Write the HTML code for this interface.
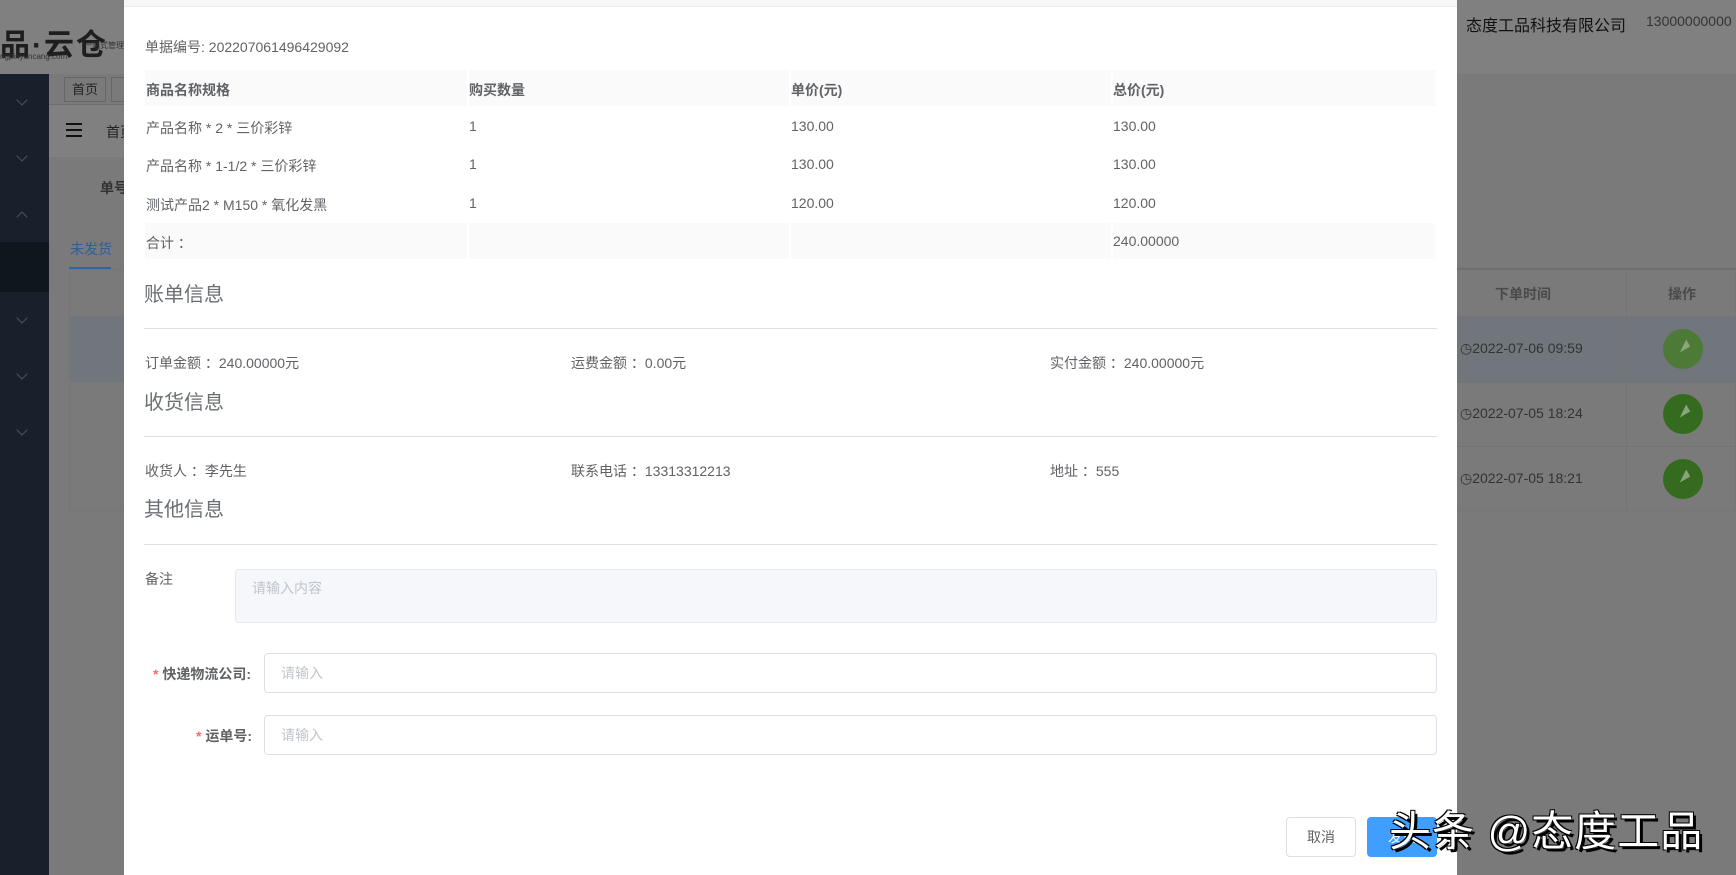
<!DOCTYPE html>
<html><head><meta charset="utf-8"><style>
*{margin:0;padding:0;box-sizing:border-box}
body{width:1736px;height:875px;overflow:hidden;background:#7a7a7a;font-family:"Liberation Sans","Noto Sans CJK SC",sans-serif;position:relative;color:#606266}
.a{position:absolute;white-space:nowrap}
.chev{position:absolute;left:18px;width:8px;height:8px;border-right:1px solid #4a5364;border-bottom:1px solid #4a5364;transform:rotate(45deg)}
.m{position:absolute;left:124px;top:0;width:1333px;height:875px;background:#fff}
.t{font-size:14px;color:#606266}
.th{background:#fafafa;position:absolute;height:36px}
.sec{font-size:20px;color:#6b6e73}
.ln{position:absolute;left:144px;width:1293px;height:1px;background:#dcdfe6}
.inp{position:absolute;border:1px solid #dcdfe6;border-radius:4px;background:#fff;font-size:14px;color:#c0c4cc;padding-left:16px}
.gc{position:absolute;width:40px;height:40px;border-radius:50%;background:#356b1f;left:1663px}
.gc:after{content:"";position:absolute;left:14px;top:13px;width:0;height:0;border-left:12px solid transparent;border-bottom:8px solid #8aa47c;transform:rotate(-30deg)}
</style></head><body>
<div class="a" style="left:0;top:0;width:1736px;height:74px;background:#808080"></div>
<div class="a" style="left:0;top:20px;font-size:30px;font-weight:bold;color:#1e1e1e;letter-spacing:2px">品·云仓</div>
<div class="a" style="left:84px;top:40px;font-size:8px;color:#333">一站式管理</div>
<div class="a" style="left:0;top:52px;font-size:8px;color:#333">ngpinyuncang.com</div>
<div class="a" style="left:1466px;top:12px;font-size:16px;color:#111">态度工品科技有限公司</div>
<div class="a" style="left:1646px;top:13px;font-size:14px;color:#333">13000000000</div>
<div class="a" style="left:0;top:74px;width:49px;height:801px;background:#1a202b"></div>
<div class="a" style="left:0;top:242px;width:49px;height:50px;background:#10161e"></div>
<div class="chev" style="top:96px"></div><div class="chev" style="top:152px"></div>
<div class="chev" style="top:213px;transform:rotate(225deg)"></div>
<div class="chev" style="top:314px"></div><div class="chev" style="top:370px"></div><div class="chev" style="top:426px"></div>
<div class="a" style="left:49px;top:104px;width:75px;height:1px;background:#6e6e6e"></div>
<div class="a" style="left:64px;top:77px;width:42px;height:25px;border:1px solid #666;font-size:13px;color:#222;text-align:center;line-height:23px">首页</div>
<div class="a" style="left:111px;top:77px;width:20px;height:25px;border:1px solid #666"></div>
<div class="a" style="left:49px;top:105px;width:75px;height:52px;background:#808080"></div>
<div class="a" style="left:66px;top:123px;width:16px;height:2px;background:#111;box-shadow:0 6px 0 #111,0 12px 0 #111"></div>
<div class="a" style="left:106px;top:122px;font-size:14px;color:#222">首页</div>
<div class="a" style="left:100px;top:178px;font-size:14px;font-weight:bold;color:#333">单号</div>
<div class="a" style="left:70px;top:239px;font-size:14px;color:#2c5f9c">未发货</div>
<div class="a" style="left:69px;top:267px;width:42px;height:2px;background:#2f67a6"></div>
<div class="a" style="left:69px;top:269px;width:1667px;height:242px;border:1px solid #767676"></div>
<div class="a" style="left:1457px;top:268px;width:279px;height:2px;background:#6f6f6f"></div>
<div class="a" style="left:69px;top:316px;width:1667px;height:66px;background:#70767b"></div>
<div class="a" style="left:1457px;top:382px;width:279px;height:1px;background:#747474"></div>
<div class="a" style="left:1457px;top:446px;width:279px;height:1px;background:#747474"></div>
<div class="a" style="left:1626px;top:269px;width:1px;height:242px;background:#747474"></div>
<div class="a" style="left:1495px;top:284px;font-size:14px;font-weight:bold;color:#4a4a4a">下单时间</div>
<div class="a" style="left:1668px;top:284px;font-size:14px;font-weight:bold;color:#4a4a4a">操作</div>
<div class="a" style="left:1460px;top:340px;font-size:14px;color:#333">◷2022-07-06 09:59</div>
<div class="a" style="left:1460px;top:405px;font-size:14px;color:#333">◷2022-07-05 18:24</div>
<div class="a" style="left:1460px;top:470px;font-size:14px;color:#333">◷2022-07-05 18:21</div>
<div class="gc" style="top:329px;background:#4e7a37"></div>
<div class="gc" style="top:394px"></div>
<div class="gc" style="top:459px"></div>

<div class="m">
<div class="a" style="left:0;top:0;width:1333px;height:7px;background:#f7f7f7;border-bottom:1px solid #ebeef5"></div>
</div>
<div class="a t" style="left:145px;top:37px">单据编号: 202207061496429092</div>
<div class="th" style="left:145px;top:70px;width:322px"></div>
<div class="th" style="left:469px;top:70px;width:320px"></div>
<div class="th" style="left:791px;top:70px;width:320px"></div>
<div class="th" style="left:1113px;top:70px;width:322px"></div>
<div class="th" style="left:145px;top:223px;width:322px"></div>
<div class="th" style="left:469px;top:223px;width:320px"></div>
<div class="th" style="left:791px;top:223px;width:320px"></div>
<div class="th" style="left:1113px;top:223px;width:322px"></div>
<div class="a t" style="left:146px;top:80px;font-weight:bold">商品名称规格</div>
<div class="a t" style="left:469px;top:80px;font-weight:bold">购买数量</div>
<div class="a t" style="left:791px;top:80px;font-weight:bold">单价(元)</div>
<div class="a t" style="left:1113px;top:80px;font-weight:bold">总价(元)</div>
<div class="a t" style="left:146px;top:118px">产品名称 * 2 * 三价彩锌</div>
<div class="a t" style="left:469px;top:118px">1</div><div class="a t" style="left:791px;top:118px">130.00</div><div class="a t" style="left:1113px;top:118px">130.00</div>
<div class="a t" style="left:146px;top:156px">产品名称 * 1-1/2 * 三价彩锌</div>
<div class="a t" style="left:469px;top:156px">1</div><div class="a t" style="left:791px;top:156px">130.00</div><div class="a t" style="left:1113px;top:156px">130.00</div>
<div class="a t" style="left:146px;top:195px">测试产品2 * M150 * 氧化发黑</div>
<div class="a t" style="left:469px;top:195px">1</div><div class="a t" style="left:791px;top:195px">120.00</div><div class="a t" style="left:1113px;top:195px">120.00</div>
<div class="a t" style="left:146px;top:233px">合计 ：</div>
<div class="a t" style="left:1113px;top:233px">240.00000</div>

<div class="a sec" style="left:144px;top:278px">账单信息</div>
<div class="ln" style="top:328px"></div>
<div class="a t" style="left:145px;top:353px">订单金额 ：240.00000元</div>
<div class="a t" style="left:571px;top:353px">运费金额 ：0.00元</div>
<div class="a t" style="left:1050px;top:353px">实付金额 ：240.00000元</div>
<div class="a sec" style="left:144px;top:386px">收货信息</div>
<div class="ln" style="top:436px"></div>
<div class="a t" style="left:145px;top:461px">收货人 ：李先生</div>
<div class="a t" style="left:571px;top:461px">联系电话 ：13313312213</div>
<div class="a t" style="left:1050px;top:461px">地址 ：555</div>
<div class="a sec" style="left:144px;top:493px">其他信息</div>
<div class="ln" style="top:544px"></div>
<div class="a t" style="left:145px;top:569px">备注</div>
<div class="inp" style="left:235px;top:569px;width:1202px;height:54px;background:#f5f7fa;border-color:#e4e7ed;padding-top:8px">请输入内容</div>
<div class="a t" style="left:153px;top:664px;font-weight:bold;color:#606266"><span style="color:#f56c6c">*</span> 快递物流公司:</div>
<div class="inp" style="left:264px;top:653px;width:1173px;height:40px;line-height:38px">请输入</div>
<div class="a t" style="left:196px;top:726px;font-weight:bold"><span style="color:#f56c6c">*</span> 运单号:</div>
<div class="inp" style="left:264px;top:715px;width:1173px;height:40px;line-height:38px">请输入</div>
<div class="a" style="left:1286px;top:817px;width:70px;height:40px;border:1px solid #dcdfe6;border-radius:4px;background:#fff;font-size:14px;color:#606266;text-align:center;line-height:38px">取消</div>
<div class="a" style="left:1367px;top:817px;width:70px;height:40px;border-radius:4px;background:#409eff;font-size:14px;color:#fff;text-align:center;line-height:40px">发货</div>
<div class="a" style="left:1389px;top:798px;font-size:42px;color:#fff;letter-spacing:1px;text-shadow:3px 3px 0 #000,-1px -1px 0 #000,1px -1px 0 #000,-1px 1px 0 #000">头条 @态度工品</div>
</body></html>
